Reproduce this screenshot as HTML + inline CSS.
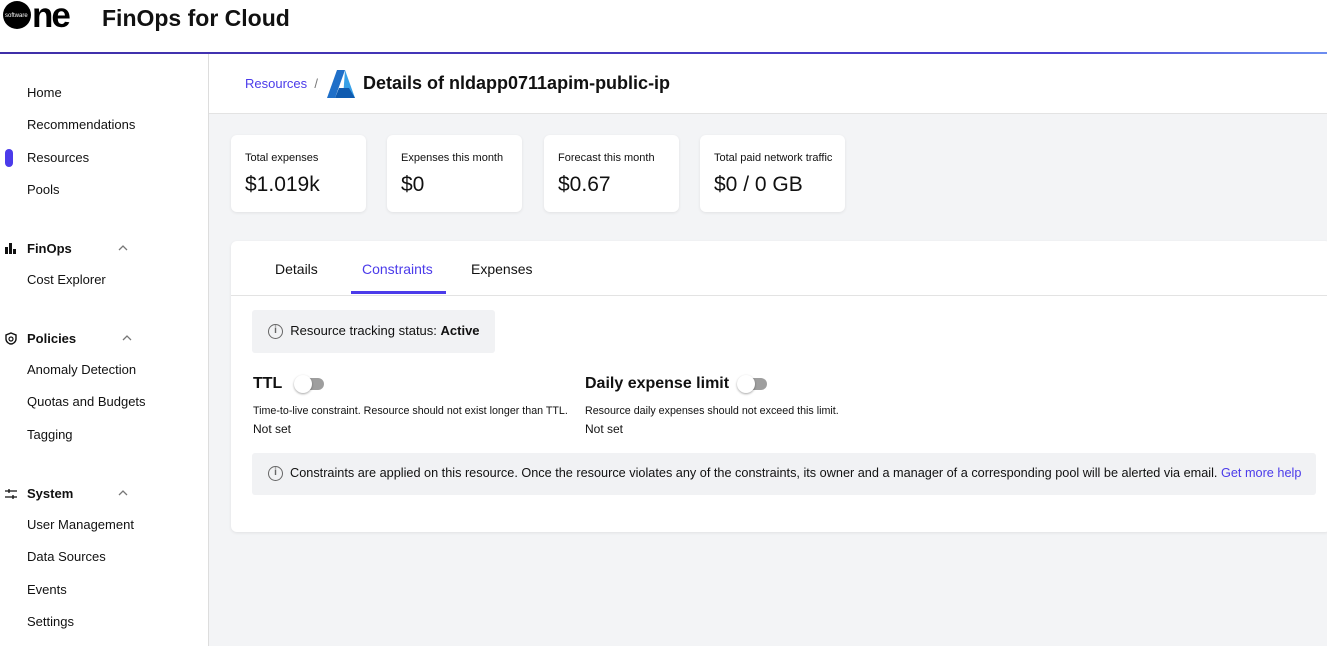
<!DOCTYPE html><html><head><style>
*{margin:0;padding:0;box-sizing:border-box}
body{width:1327px;height:646px;overflow:hidden;font-family:"Liberation Sans",sans-serif;color:#111;background:#fff;position:relative}
.abs{position:absolute}
.nav{position:absolute;left:27px;font-size:13px;color:#111}
.sec{position:absolute;left:27px;font-size:13px;font-weight:bold}
.chev{position:absolute;left:118px}
.card{position:absolute;top:135px;height:77px;background:#fff;border-radius:6px;box-shadow:0 1px 3px rgba(0,0,0,.08)}
.card .l{position:absolute;left:14px;top:17px;font-size:11px}
.card .v{position:absolute;left:14px;top:38px;font-size:21px}
.tog{display:inline-block;position:relative;width:32px;height:14px;vertical-align:middle;margin-left:8px}
.tog:before{content:"";position:absolute;left:4px;top:1px;width:26px;height:12px;border-radius:6px;background:#9e9e9e}
.tog:after{content:"";position:absolute;left:0;top:-2px;width:18px;height:18px;border-radius:50%;background:#fff;box-shadow:0 1px 2px rgba(0,0,0,.35)}
.info{display:inline-block;width:15px;height:15px;border:1.4px solid #666;border-radius:50%;font-size:10px;text-align:center;line-height:12px;color:#666;font-weight:bold;vertical-align:middle}
</style></head><body>
<svg class="abs" style="left:2px;top:0" width="76" height="30"><circle cx="15" cy="15" r="14" fill="#000"/><text x="3" y="17" font-size="6" fill="#fff" font-family="Liberation Sans">software</text><text x="30" y="27" font-size="35" font-weight="bold" fill="#000" font-family="Liberation Sans" letter-spacing="-2">ne</text></svg>
<div class="abs" style="left:102px;top:5px;font-size:23px;font-weight:bold">FinOps for Cloud</div>
<div class="abs" style="left:0;top:52px;width:1327px;height:2px;background:linear-gradient(90deg,#3f2fa8,#4a3fd0 80%,#6d8ef0)"></div>
<div class="abs" style="left:208px;top:54px;width:1px;height:592px;background:#ddd"></div>
<div class="nav" style="top:85px">Home</div>
<div class="nav" style="top:117px">Recommendations</div>
<div class="abs" style="left:5px;top:149px;width:8px;height:18px;border-radius:4px;background:#4b3bea"></div>
<div class="nav" style="top:150px">Resources</div>
<div class="nav" style="top:182px">Pools</div>
<svg class="abs" style="left:5px;top:243px" width="12" height="11"><rect x="0" y="4" width="3" height="7" fill="#111"/><rect x="4" y="0" width="3" height="11" fill="#111"/><rect x="8" y="6" width="3" height="5" fill="#111"/></svg>
<div class="sec" style="top:241px">FinOps</div><svg class="chev" style="top:245px" width="10" height="6"><path d="M1 5l4-4 4 4" fill="none" stroke="#777" stroke-width="1.3"/></svg>
<div class="nav" style="top:272px">Cost Explorer</div>
<svg class="abs" style="left:5px;top:332px" width="12" height="13"><path d="M6 1 L11 3 V7 C11 10 8 12 6 12 C4 12 1 10 1 7 V3 Z" fill="none" stroke="#111" stroke-width="1.4"/><circle cx="6" cy="7" r="2" fill="none" stroke="#111" stroke-width="1.2"/></svg>
<div class="sec" style="top:331px">Policies</div><svg class="chev" style="top:335px;left:122px" width="10" height="6"><path d="M1 5l4-4 4 4" fill="none" stroke="#777" stroke-width="1.3"/></svg>
<div class="nav" style="top:362px">Anomaly Detection</div>
<div class="nav" style="top:394px">Quotas and Budgets</div>
<div class="nav" style="top:427px">Tagging</div>
<svg class="abs" style="left:5px;top:488px" width="12" height="12" stroke="#111" stroke-width="1.3"><path d="M0 3h12M0 9h12M4 1v4M8 7v4"/></svg>
<div class="sec" style="top:486px">System</div><svg class="chev" style="top:490px" width="10" height="6"><path d="M1 5l4-4 4 4" fill="none" stroke="#777" stroke-width="1.3"/></svg>
<div class="nav" style="top:517px">User Management</div>
<div class="nav" style="top:549px">Data Sources</div>
<div class="nav" style="top:582px">Events</div>
<div class="nav" style="top:614px">Settings</div>
<div class="abs" style="left:209px;top:113px;width:1118px;height:533px;background:#f3f4f6"></div>
<div class="abs" style="left:209px;top:113px;width:1118px;height:1px;background:#e3e3e3"></div>
<div class="abs" style="left:245px;top:76px;font-size:13px;color:#4b3bea">Resources <span style="color:#777">&nbsp;/</span></div>
<svg class="abs" style="left:326px;top:69px" width="30" height="30"><path d="M11 1h8L9 29H1z" fill="#1f6fc8"/><path d="M19 1l10 28H17z" fill="#37a0e8"/><path d="M13 19h10l6 10H9z" fill="#0f5bb0"/></svg>
<div class="abs" style="left:363px;top:73px;font-size:18px;font-weight:bold">Details of nldapp0711apim-public-ip</div>
<div class="card" style="left:231px;width:135px"><div class="l">Total expenses</div><div class="v">$1.019k</div></div>
<div class="card" style="left:387px;width:135px"><div class="l">Expenses this month</div><div class="v">$0</div></div>
<div class="card" style="left:544px;width:135px"><div class="l">Forecast this month</div><div class="v">$0.67</div></div>
<div class="card" style="left:700px;width:145px"><div class="l">Total paid network traffic</div><div class="v">$0 / 0 GB</div></div>
<div class="abs" style="left:231px;top:241px;width:1100px;height:291px;background:#fff;border-radius:6px;box-shadow:0 1px 3px rgba(0,0,0,.08)"></div>
<div class="abs" style="left:275px;top:261px;font-size:14px">Details</div>
<div class="abs" style="left:362px;top:261px;font-size:14px;color:#4b3bea">Constraints</div>
<div class="abs" style="left:351px;top:291px;width:95px;height:3px;background:#4b3bea"></div>
<div class="abs" style="left:471px;top:261px;font-size:14px">Expenses</div>
<div class="abs" style="left:231px;top:295px;width:1096px;height:1px;background:#e3e3e3"></div>
<div class="abs" style="left:252px;top:310px;width:243px;height:43px;background:#f1f2f4;border-radius:3px;padding:13px 0 0 16px;font-size:13px"><span class="info">i</span>&nbsp;&nbsp;Resource tracking status: <b>Active</b></div>
<div class="abs" style="left:253px;top:375px;font-size:16px;font-weight:bold">TTL<span class="tog" style="margin-left:12px"></span></div>
<div class="abs" style="left:253px;top:405px;font-size:10.7px">Time-to-live constraint. Resource should not exist longer than TTL.</div>
<div class="abs" style="left:253px;top:422px;font-size:12px">Not set</div>
<div class="abs" style="left:585px;top:375px;font-size:16px;font-weight:bold">Daily expense limit<span class="tog"></span></div>
<div class="abs" style="left:585px;top:405px;font-size:10.7px">Resource daily expenses should not exceed this limit.</div>
<div class="abs" style="left:585px;top:422px;font-size:12px">Not set</div>
<div class="abs" style="left:252px;top:453px;width:1064px;height:42px;background:#f1f2f4;border-radius:3px;padding:13px 0 0 16px;font-size:12.7px;white-space:nowrap"><span class="info">i</span>&nbsp;&nbsp;Constraints are applied on this resource. Once the resource violates any of the constraints, its owner and a manager of a corresponding pool will be alerted via email. <span style="color:#4b3bea">Get more help</span></div>
</body></html>
